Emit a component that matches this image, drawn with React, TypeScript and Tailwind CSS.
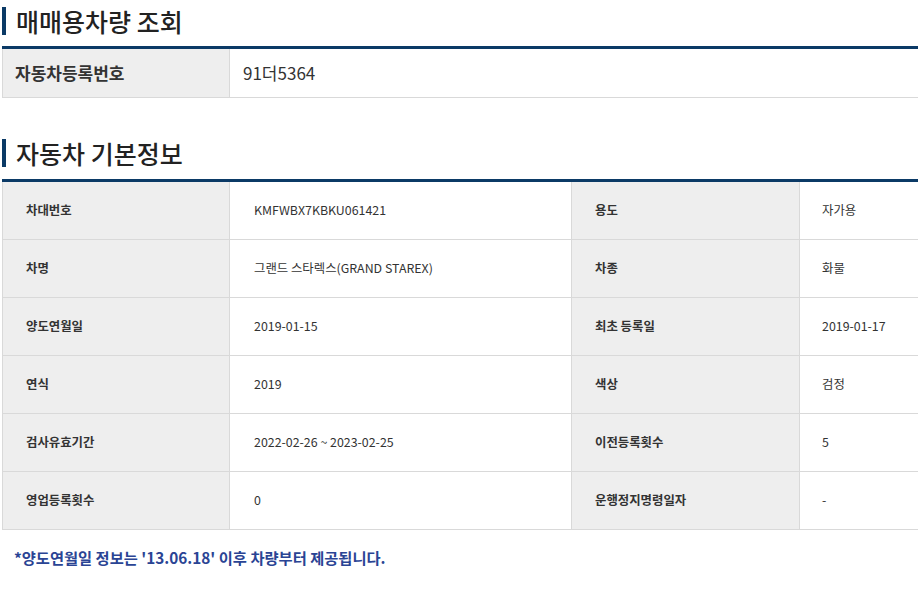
const font = { fontFamily: '"Noto Sans CJK KR", "Noto Sans", sans-serif' }

type Row = [string, string, string, string]

const rows: Row[] = [
  ['차대번호', 'KMFWBX7KBKU061421', '용도', '자가용'],
  ['차명', '그랜드 스타렉스(GRAND STAREX)', '차종', '화물'],
  ['양도연월일', '2019-01-15', '최초 등록일', '2019-01-17'],
  ['연식', '2019', '색상', '검정'],
  ['검사유효기간', '2022-02-26 ~ 2023-02-25', '이전등록횟수', '5'],
  ['영업등록횟수', '0', '운행정지명령일자', '-'],
]

function SectionTitle({ children }: { children: string }) {
  return (
    <div className="flex items-center h-[28px] border-l-4 border-[#0b3a66] pl-[10px]">
      <h2 className="text-[25px] leading-none font-medium text-[#222]">{children}</h2>
    </div>
  )
}

export default function App() {
  return (
    <div className="w-[918px] h-[590px] bg-white pl-[2px] pt-[7px]" style={font}>
      <SectionTitle>매매용차량 조회</SectionTitle>

      <div className="mt-[11px] border-t-[3px] border-[#0b3a66]">
        <div className="grid grid-cols-[228px_1fr] h-[49px] border-b border-[#d9d9d9]">
          <div className="flex items-center bg-[#eeeeee] border-l border-r border-[#d9d9d9] pl-[12px] text-[17px] font-bold text-[#333]">
            자동차등록번호
          </div>
          <div className="flex items-center pl-[13px] text-[17px] text-[#333]">91더5364</div>
        </div>
      </div>

      <div className="mt-[41px]">
        <SectionTitle>자동차 기본정보</SectionTitle>
      </div>

      <div className="mt-[12px] border-t-[3px] border-[#0b3a66]">
        {rows.map((r) => (
          <div key={r[0]} className="grid grid-cols-[228px_342px_228px_1fr] h-[58px] border-b border-[#d9d9d9] text-[12.4px] text-[#333]">
            <div className="flex items-center bg-[#eeeeee] border-l border-r border-[#d9d9d9] pl-[23px] font-bold">{r[0]}</div>
            <div className="flex items-center border-r border-[#d9d9d9] pl-[24px]">{r[1]}</div>
            <div className="flex items-center bg-[#eeeeee] border-r border-[#d9d9d9] pl-[23px] font-bold">{r[2]}</div>
            <div className="flex items-center pl-[22px]">{r[3]}</div>
          </div>
        ))}
      </div>

      <p className="mt-[16px] pl-[12px] text-[15.3px] font-bold text-[#2a4494]">
        *양도연월일 정보는 '13.06.18' 이후 차량부터 제공됩니다.
      </p>
    </div>
  )
}
